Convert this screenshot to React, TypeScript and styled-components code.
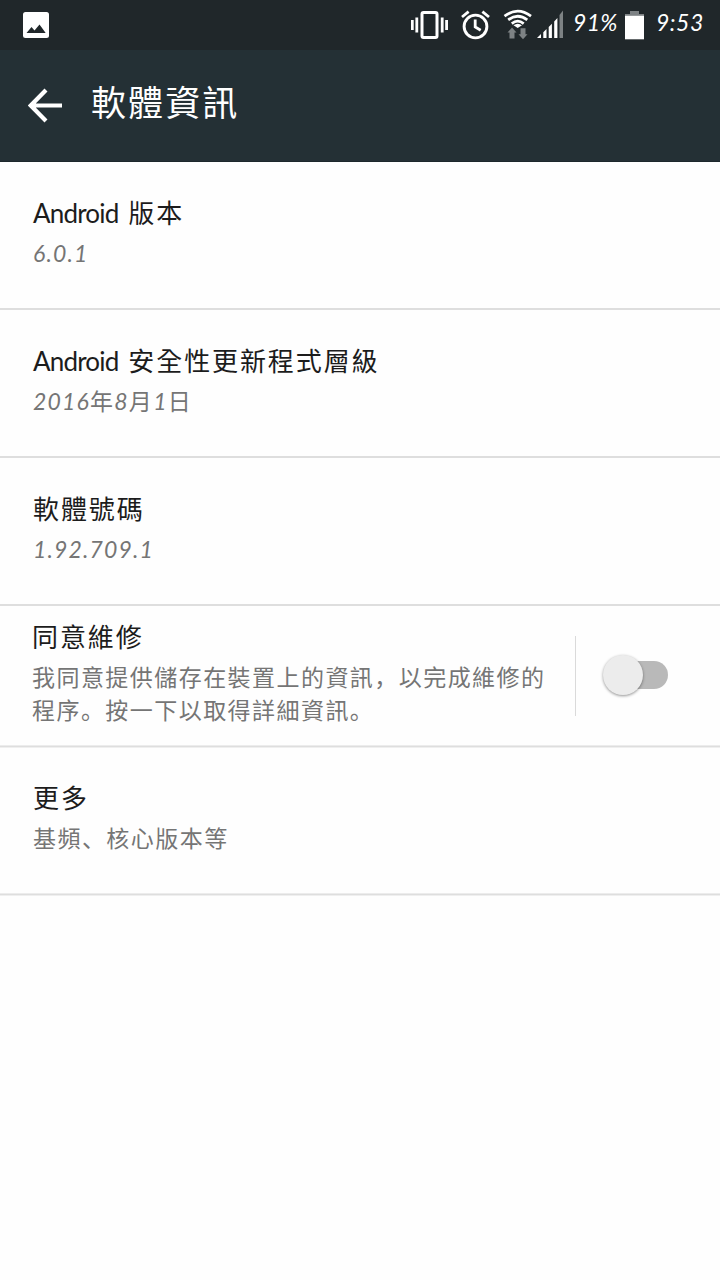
import React from 'react';
import styled, { createGlobalStyle } from 'styled-components';

const GlobalStyle = createGlobalStyle`
  * { box-sizing: border-box; }
  body {
    margin: 0;
    background: #fefefe;
    font-family: "Lato", "Noto Sans CJK TC", sans-serif;
  }
`;

const Screen = styled.main`
  display: flex;
  flex-direction: column;
  width: 720px;
  height: 1280px;
  overflow: hidden;
  background: #fefefe;
`;

const StatusBar = styled.header`
  display: flex;
  align-items: flex-start;
  height: 50px;
  padding: 0 16px 0 23px;
  background: #20272a;
  color: #fff;
`;

const StatusIcon = styled.svg<{ $top: number; $left?: number }>`
  display: block;
  flex: none;
  margin-top: ${(p) => p.$top}px;
  margin-left: ${(p) => p.$left ?? 0}px;
`;

const Spacer = styled.div`
  flex: 1;
`;

const StatusText = styled.span<{ $width: number; $left: number; $spacing: number }>`
  flex: none;
  width: ${(p) => p.$width}px;
  margin-left: ${(p) => p.$left}px;
  font-size: 23px;
  font-style: italic;
  line-height: 44px;
  letter-spacing: ${(p) => p.$spacing}px;
  white-space: nowrap;
`;

const AppBar = styled.div`
  display: flex;
  align-items: center;
  height: 112px;
  padding-left: 28px;
  background: #243035;
  border-bottom: 1px solid #1d282c;
  color: #fff;
`;

const AppTitle = styled.h1`
  margin: 0 0 7px 28px;
  font-size: 35px;
  font-weight: 400;
  line-height: 44px;
  letter-spacing: 2.1px;
`;

const Row = styled.section<{ $height?: number; $top?: number; $left?: number; $softLine?: boolean }>`
  display: flex;
  height: ${(p) => p.$height ?? 148}px;
  padding: ${(p) => p.$top ?? 34}px 0 0 ${(p) => p.$left ?? 33}px;
  border-bottom: ${(p) => (p.$softLine ? 1 : 2)}px solid #dedede;
  box-shadow: ${(p) => (p.$softLine ? '0 1px 0 #efefef, inset 0 -1px 0 #ececec' : 'none')};
`;

const RowText = styled.div`
  flex: 1;
`;

const RowTitle = styled.h2`
  margin: 0;
  color: #1c1c1c;
  font-size: 26px;
  font-weight: 400;
  line-height: 34px;
  letter-spacing: 1.9px;
  white-space: nowrap;
`;

const Summary = styled.p`
  margin: 7px 0 0;
  color: #757575;
  font-size: 23px;
  font-weight: 400;
  line-height: 33px;
  letter-spacing: 1.45px;
  white-space: nowrap;
`;

const Latin = styled.span`
  margin-right: 4px;
  letter-spacing: -0.8px;
`;

const Digits = styled.span`
  font-size: 23px;
  font-style: italic;
  letter-spacing: 1.15px;
`;

const Punct = styled.span`
  font-family: "Noto Sans CJK JP", sans-serif;
  line-height: 0;
`;

const SwitchArea = styled.div`
  display: flex;
  align-items: center;
  width: 145px;
  height: 80px;
  margin-top: 16px;
  padding: 0 0 2px 27px;
  border-left: 1px solid #dadada;
`;

const Track = styled.button`
  display: flex;
  align-items: center;
  width: 65px;
  height: 28px;
  padding: 0;
  border: 0;
  border-radius: 14px;
  background: linear-gradient(to right, transparent 20px, #b9b9b9 20px);
`;

const Thumb = styled.span`
  flex: none;
  width: 40px;
  height: 40px;
  border-radius: 50%;
  background: #ececec;
  box-shadow: 0 1px 3px rgba(0, 0, 0, 0.42);
`;

export default function App() {
  return (
    <>
      <GlobalStyle />
      <Screen>
        <StatusBar>
          <StatusIcon $top={12} width="26" height="26" viewBox="0 0 26 26">
            <rect width="26" height="26" rx="2.5" fill="#fff" />
            <path d="M3.5 21 8.5 15 11.5 18.5 16.5 12.5 22.7 21Z" fill="#20272a" />
          </StatusIcon>
          <Spacer />
          <StatusIcon $top={11} width="38" height="28" viewBox="0 0 38 28">
            <rect x="11" y="1.6" width="15" height="24.8" rx="1.5" fill="none" stroke="#fff" strokeWidth="3" />
            <path d="M1.3 9v10M5.8 6.5v15M31.2 6.5v15M35.6 9v10" stroke="#fff" strokeWidth="2.8" />
          </StatusIcon>
          <StatusIcon $top={10} $left={12} width="30" height="30" viewBox="0 0 30 30">
            <circle cx="14.5" cy="16.5" r="11.4" fill="none" stroke="#fff" strokeWidth="2.9" />
            <path d="M14.2 9.5v7.4l5.5 3.4M1 7 7.6 1.6M21.4 1.6 28 7" fill="none" stroke="#fff" strokeWidth="2.8" />
          </StatusIcon>
          <StatusIcon $top={9} $left={12} width="30" height="32" viewBox="0 0 30 32">
            <g fill="none" stroke="#fff" strokeWidth="2.7">
              <path d="M1.5 7.2Q14.7-2.8 28 7.2M5.2 10.9Q14.7 3.6 24.3 10.9M8.8 14.6Q14.7 9.8 20.7 14.6" />
            </g>
            <path d="M10.5 16.2Q14.7 13.2 19 16.2L14.7 19Z" fill="#fff" />
            <path d="M9 18.5 13.5 23.5H11.5v6h-5v-6H4.5ZM20 30.3 15.5 25.3H17.5v-6h5v6h2Z" fill="#7d8284" />
          </StatusIcon>
          <StatusIcon $top={9} $left={4} width="28" height="30" viewBox="0 0 28 30">
            <path d="M0 29 4 25v4ZM6.3 23.3 9.5 20v9H6.3ZM11.7 18 14.9 14.7V29h-3.2ZM17.2 12.5 20.4 9V29h-3.2Z" fill="#fff" />
            <path d="M22.5 6 26 1.5V29h-3.5Z" fill="#7d8284" />
          </StatusIcon>
          <StatusText $left={8} $width={52} $spacing={0.3}>91%</StatusText>
          <StatusIcon $top={11} width="19" height="29" viewBox="0 0 19 29">
            <path d="M5 0h9v3h5v25.7H0V3h5Z" fill="#7d8284" />
            <path d="M0 4.8h19v23.2H0Z" fill="#fff" />
          </StatusIcon>
          <StatusText $left={12} $width={48} $spacing={0.5}>9:53</StatusText>
        </StatusBar>

        <AppBar>
          <svg width="35" height="35" viewBox="0 0 35 35">
            <path d="M18 2 2.8 17.5 18 33M3 17.5h31" fill="none" stroke="#fff" strokeWidth="4.2" />
          </svg>
          <AppTitle>軟體資訊</AppTitle>
        </AppBar>

        <Row>
          <RowText>
            <RowTitle><Latin>Android </Latin>版本</RowTitle>
            <Summary><Digits>6.0.1</Digits></Summary>
          </RowText>
        </Row>
        <Row>
          <RowText>
            <RowTitle><Latin>Android </Latin>安全性更新程式層級</RowTitle>
            <Summary>
              <Digits>2016</Digits>年<Digits>8</Digits>月<Digits>1</Digits>日
            </Summary>
          </RowText>
        </Row>
        <Row>
          <RowText>
            <RowTitle>軟體號碼</RowTitle>
            <Summary><Digits>1.92.709.1</Digits></Summary>
          </RowText>
        </Row>
        <Row $height={141} $top={14} $left={32} $softLine>
          <RowText>
            <RowTitle>同意維修</RowTitle>
            <Summary>
              我同意提供儲存在裝置上的資訊<Punct>，</Punct>以完成維修的<br />
              程序<Punct>。</Punct>按一下以取得詳細資訊<Punct>。</Punct>
            </Summary>
          </RowText>
          <SwitchArea>
            <Track type="button" role="switch" aria-checked="false" aria-label="同意維修">
              <Thumb />
            </Track>
          </SwitchArea>
        </Row>
        <Row $softLine>
          <RowText>
            <RowTitle>更多</RowTitle>
            <Summary>基頻<Punct>、</Punct>核心版本等</Summary>
          </RowText>
        </Row>
      </Screen>
    </>
  );
}
